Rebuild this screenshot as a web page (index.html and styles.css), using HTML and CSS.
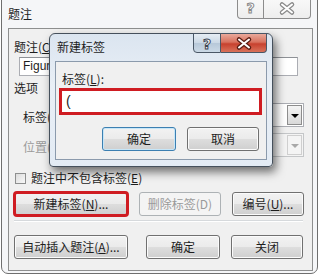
FILE: index.html
```html
<!DOCTYPE html>
<html lang="zh">
<head>
    <meta charset="utf-8">
    <title>题注</title>
    <link rel="stylesheet" href="styles.css">
</head>
<body>
    <div class="window">
        <div class="titlebar">
            <span class="title">题注</span>
            <div class="caption-btns">
                <span class="cap-help">?</span>
                <span class="cap-close">
                    <svg width="14" height="11" viewBox="0 0 14 11">
                        <path class="x-out" d="M2 1.5 L12 9.5 M12 1.5 L2 9.5" />
                        <path class="x-in" d="M2 1.5 L12 9.5 M12 1.5 L2 9.5" />
                    </svg>
                </span>
            </div>
        </div>

        <div class="panel">
            <div class="label cap-label">题注(<u>C</u>):</div>
            <div class="field">Figure</div>
            <div class="label group-title">选项</div>

            <div class="opt-row">
                <span class="label">标签(<u>L</u>):</span>
                <div class="combo"><span class="arrow"></span></div>
            </div>
            <div class="opt-row disabled">
                <span class="label">位置(<u>P</u>):</span>
                <div class="combo"><span class="arrow"></span></div>
            </div>

            <div class="check-row">
                <span class="checkbox"></span>
                <span class="label">题注中不包含标签(<u>E</u>)</span>
            </div>

            <div class="btn-row">
                <button class="btn wide marked">新建标签(<u>N</u>)...</button>
                <button class="btn mid" disabled>删除标签(D)</button>
                <button class="btn">编号(<u>U</u>)...</button>
            </div>
            <div class="sep"></div>
            <div class="btn-row last">
                <button class="btn wide">自动插入题注(<u>A</u>)...</button>
                <button class="btn">确定</button>
                <button class="btn">关闭</button>
            </div>
        </div>
    </div>

    <div class="dialog">
        <div class="titlebar">
            <span class="title">新建标签</span>
            <div class="caption-btns">
                <span class="cap-help">?</span>
                <span class="cap-close">
                    <svg width="14" height="11" viewBox="0 0 14 11">
                        <path class="x-out" d="M2 1.5 L12 9.5 M12 1.5 L2 9.5" />
                        <path class="x-in" d="M2 1.5 L12 9.5 M12 1.5 L2 9.5" />
                    </svg>
                </span>
            </div>
        </div>
        <div class="panel">
            <div class="label">标签(<u>L</u>):</div>
            <div class="name-input">(</div>
            <div class="dlg-btns">
                <button class="btn default">确定</button>
                <button class="btn">取消</button>
            </div>
        </div>
    </div>
</body>
</html>
```

FILE: styles.css
```css
body {
    margin: 0;
    background: #ffffff;
    font-family: "Noto Sans CJK SC", sans-serif;
    font-size: 12px;
    color: #1e1e1e;
}
u {
    text-decoration: underline;
    text-underline-offset: 1px;
}
.label {
    line-height: 16px;
    white-space: nowrap;
}

/* outer window (inactive) */
.window {
    width: 317px;
    height: 281px;
    margin: -7px 0 0 1px;
    padding: 0 4px 0 6px;
    box-sizing: border-box;
    border: 1px solid #6f6f6f;
    border-radius: 7px;
    background: #f5f6f8;
}
.titlebar {
    display: flex;
    height: 34px;
}
.title {
    padding-top: 12px;
    line-height: 16px;
    font-size: 12px;
}
.caption-btns {
    display: flex;
    margin-left: auto;
    margin-right: 2px;
    height: 25px;
}
.caption-btns span {
    display: flex;
    align-items: center;
    justify-content: center;
    box-sizing: border-box;
    border: 1px solid #8c8c8c;
    border-top: none;
    background: linear-gradient(#fbfbfb, #eeeeee);
}
.cap-help {
    width: 27px;
    border-radius: 0 0 0 4px;
    font-family: "DejaVu Sans", sans-serif;
    font-weight: bold;
    font-size: 14px;
    color: #fff;
    -webkit-text-stroke: 1px #8a8a8a;
    padding-top: 4px;
}
.cap-close {
    width: 47px;
    border-left: none !important;
    border-radius: 0 0 4px 0;
    padding-top: 4px;
}
.cap-close svg {
    overflow: visible;
}
.cap-close path {
    fill: none;
    stroke-linecap: round;
}
.cap-close .x-out {
    stroke: #8a8a8a;
    stroke-width: 4.5;
}
.cap-close .x-in {
    stroke: #fff;
    stroke-width: 2;
}

.panel {
    width: 305px;
    height: 243px;
    box-sizing: border-box;
    border: 1px solid #8e8f8f;
    background: #f0f0f0;
    padding: 0 9px 0 5px;
}
.cap-label {
    margin-top: 10px;
}
.field {
    width: 279px;
    height: 19px;
    margin: 2px 0 0 5px;
    box-sizing: border-box;
    border: 1px solid #abadb3;
    border-top-color: #8e9196;
    background: #fff;
    font-family: "Liberation Sans", sans-serif;
    font-size: 12px;
    line-height: 17px;
    padding-left: 3px;
}
.group-title {
    margin-top: 4px;
}
.opt-row {
    display: flex;
    align-items: center;
    height: 24px;
    margin-top: 7px;
    padding-left: 9px;
}
.opt-row + .opt-row {
    margin-top: 6px;
}
.opt-row .label {
    padding-top: 3px;
}
.combo {
    display: flex;
    justify-content: flex-end;
    width: 230px;
    height: 24px;
    margin-left: auto;
    margin-right: -1px;
    box-sizing: border-box;
    border: 1px solid #abadb3;
    background: #fff;
    padding: 1px;
}
.arrow {
    position: relative;
    width: 15px;
    box-sizing: border-box;
    border: 1px solid #8d8d8d;
    background: linear-gradient(#f4f4f4, #d8d8d8);
}
.arrow::after {
    content: "";
    position: absolute;
    left: 3px;
    top: 8px;
    border-left: 4px solid transparent;
    border-right: 4px solid transparent;
    border-top: 4px solid #000;
}
.disabled .label {
    color: #9a9a9a;
}
.disabled .combo {
    border-color: #c4c6c8;
    background: #f4f4f4;
}
.disabled .arrow {
    border-color: #cfcfcf;
    background: #f4f4f4;
}
.disabled .arrow::after {
    border-top-color: #a8a8a8;
}

.check-row {
    display: flex;
    align-items: center;
    gap: 5px;
    margin-top: 13px;
    height: 16px;
}
.checkbox {
    width: 11px;
    height: 11px;
    margin-left: 1px;
    box-sizing: border-box;
    border: 1px solid #8e8f8f;
    background: linear-gradient(135deg, #dcdcdc, #f8f8f8);
}

.btn-row {
    display: grid;
    grid-template-columns: 114px 1fr 72px;
    column-gap: 11px;
    margin-top: 6px;
}
.btn-row.last {
    margin-top: 13px;
}
.btn-row .btn:nth-child(2) {
    width: 74px;
    justify-self: end;
}
.btn-row .btn.mid {
    width: 82px;
}
.btn {
    height: 24px;
    padding: 0;
    box-sizing: border-box;
    border: 1px solid #707070;
    border-radius: 3px;
    background: linear-gradient(#f2f2f2 0%, #ebebeb 48%, #dddddd 52%, #cfcfcf 100%);
    box-shadow: inset 0 0 0 1px #fbfbfb;
    font-family: "Noto Sans CJK SC", sans-serif;
    font-size: 12px;
    line-height: 16px;
    color: #1e1e1e;
}
.btn:disabled {
    border-color: #adb2b5;
    background: #f4f4f4;
    box-shadow: none;
    color: #9a9a9a;
}
.btn.marked {
    outline: 3px solid #cf1c22;
    outline-offset: -2px;
}
.sep {
    height: 1px;
    margin-top: 4px;
    background: #d6d9dc;
    border-bottom: 1px solid #fff;
}

/* new label dialog (active) */
.dialog {
    position: absolute;
    left: 49px;
    top: 33px;
    width: 224px;
    height: 134px;
    box-sizing: border-box;
    padding: 0 5px;
    border: 1px solid #45505c;
    border-radius: 6px 6px 4px 4px;
    background: linear-gradient(#dbe5f0, #e9eff6 40%, #e3ebf4);
    box-shadow: 3px 5px 10px rgba(0, 0, 0, 0.55);
}
.dialog .titlebar {
    height: 27px;
}
.dialog .title {
    padding: 5px 0 0 2px;
}
.dialog .caption-btns {
    margin-top: -1px;
    margin-right: 0;
    height: 20px;
}
.dialog .caption-btns span {
    border-color: #4a5766;
    border-top: 1px solid #4a5766;
    padding-top: 1px;
}
.dialog .cap-help {
    width: 28px;
    background: linear-gradient(#e6edf4, #cbd8e5 50%, #b7c8d9 51%, #cbd9e6);
    -webkit-text-stroke: 1px #3d4753;
}
.dialog .cap-close {
    width: 46px;
    background: linear-gradient(#e9a99b, #d8725f 45%, #c7412e 55%, #d9725b);
}
.dialog .cap-close .x-out {
    stroke: #5a1d14;
}
.dialog .panel {
    width: 212px;
    height: 99px;
    border-color: #8b9aac;
    padding: 0 0 0 3px;
}
.dialog .panel > .label {
    margin-top: 9px;
    padding-left: 3px;
}
.name-input {
    width: 203px;
    height: 27px;
    margin-top: 1px;
    box-sizing: border-box;
    border: 3px solid #cf1c22;
    background: #fff;
    padding-left: 4px;
    font-family: "Liberation Sans", sans-serif;
    font-size: 14px;
    line-height: 20px;
}
.dlg-btns {
    display: flex;
    gap: 11px;
    margin: 12px 0 0 43px;
}
.dlg-btns .btn {
    width: 72px;
}
.dlg-btns .btn.default {
    width: 74px;
    border-color: #3c7fb1;
    box-shadow: inset 0 0 0 1px #c6e6f8;
}
```
